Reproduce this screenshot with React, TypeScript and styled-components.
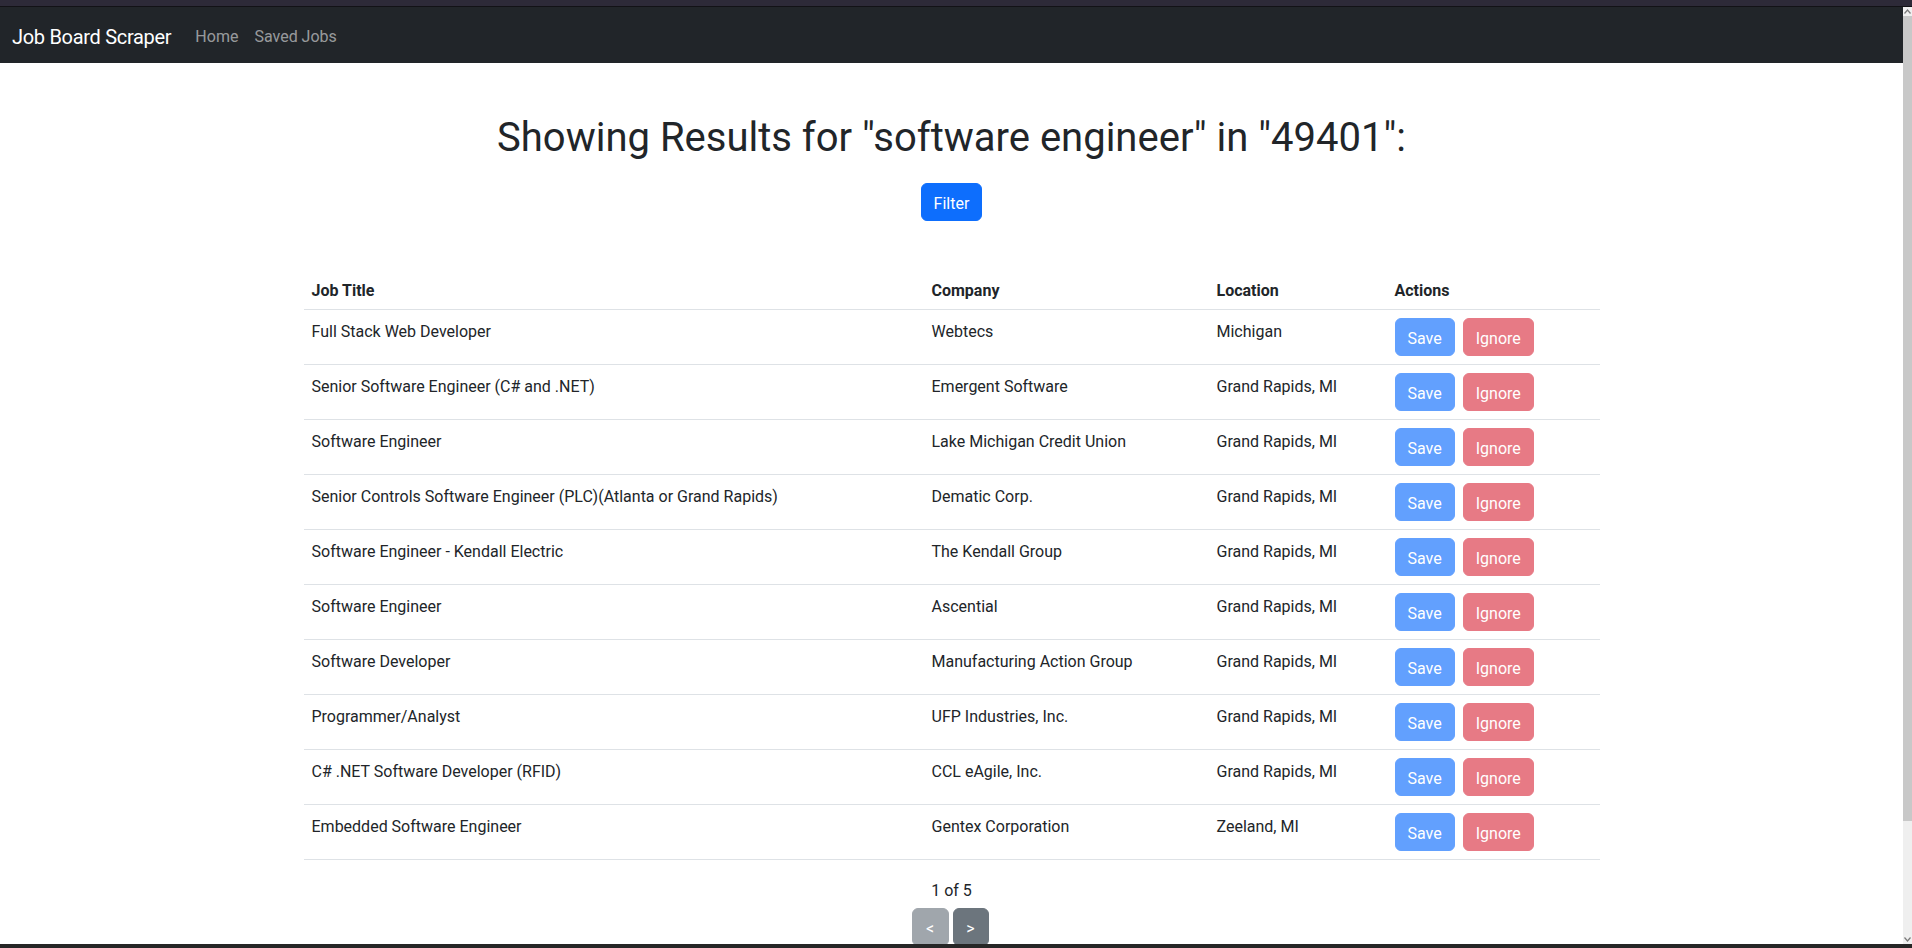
import React from 'react';
import styled, { createGlobalStyle } from 'styled-components';

const FONT = `Roboto, "Liberation Sans", Arial, sans-serif`;

const GlobalStyle = createGlobalStyle`
  *, *::before, *::after { box-sizing: border-box; }
  html, body { margin: 0; padding: 0; overflow: hidden; background: #fff; }
  body {
    font-family: ${FONT};
    font-size: 16px;
    line-height: 1.5;
    color: #212529;
  }
`;

const Frame = styled.div`
  display: flex;
  flex-direction: column;
  width: 1912px;
  height: 948px;
  overflow: hidden;
`;

const TopStrip = styled.div`
  flex-shrink: 0;
  height: 7px;
  background: #2d2a38;
  border-bottom: 1px solid #121216;
`;

const BottomStrip = styled.div`
  flex-shrink: 0;
  height: 4px;
  background: #262626;
`;

const Middle = styled.div`
  flex: 1;
  display: flex;
  min-height: 0;
`;

const Page = styled.div`
  flex: 1;
  min-width: 0;
  overflow: hidden;
  background: #fff;
`;

const Scrollbar = styled.div`
  flex-shrink: 0;
  width: 9px;
  display: flex;
  flex-direction: column;
  background: #f0f0f0;
`;

const ScrollArrow = styled.div`
  height: 9px;
  display: flex;
  align-items: center;
  justify-content: center;
  background: #f0f0f0;
`;

const Thumb = styled.div`
  height: 805px;
  background: #c8c8c8;
`;

const Track = styled.div`
  flex: 1;
  background: #efefef;
`;

const Navbar = styled.nav`
  height: 56px;
  background: #212529;
  display: flex;
  align-items: center;
  padding: 3px 12px 0;
`;

const Brand = styled.a`
  font-size: 20px;
  line-height: 30px;
  letter-spacing: -0.3px;
  color: #fff;
  margin-right: 16px;
  text-decoration: none;
`;

const NavLink = styled.a`
  padding: 8px;
  font-size: 16px;
  line-height: 24px;
  color: rgba(255, 255, 255, 0.55);
  text-decoration: none;
`;

const Container = styled.main`
  max-width: 1320px;
  margin: 0 auto;
  padding: 0 12px;
  text-align: center;
`;

const Title = styled.h1`
  margin: 51px 0 21px;
  font-size: 40px;
  font-weight: 400;
  line-height: 1.2;
  color: #212529;
`;

type Variant = 'primary' | 'save' | 'ignore' | 'prev' | 'next';

const COLORS: Record<Variant, string> = {
  primary: '#0d6efd',
  save: '#62a0fe',
  ignore: '#e77a85',
  prev: '#a0a6ac',
  next: '#6c757d',
};

const Btn = styled.button<{ $variant: Variant }>`
  display: inline-block;
  font-family: ${FONT};
  font-size: 16px;
  line-height: 24px;
  padding: 8px 12px 4px;
  border-radius: 6px;
  border: 1px solid ${(p) => COLORS[p.$variant]};
  background: ${(p) => COLORS[p.$variant]};
  color: #fff;
  text-align: center;
  cursor: pointer;
`;

const PagerBtn = styled(Btn)<{ $w: number }>`
  width: ${(p) => p.$w}px;
  padding-left: 0;
  padding-right: 0;
`;

const Table = styled.table`
  width: 100%;
  margin: 48px 0 16px;
  border-collapse: collapse;
  text-align: left;
  table-layout: fixed;
`;

const Th = styled.th<{ $w: number }>`
  width: ${(p) => p.$w}px;
  padding: 10px 8px 6px;
  font-weight: 700;
  line-height: 24px;
  vertical-align: top;
  border-bottom: 1px solid #dee2e6;
`;

const Td = styled.td<{ $action?: boolean }>`
  padding: ${(p) => (p.$action ? '8px' : '10px 8px 6px')};
  line-height: 24px;
  vertical-align: top;
  border-bottom: 1px solid #dee2e6;
`;

const Actions = styled.div`
  display: flex;
  gap: 8px;
`;

const PageInfo = styled.p`
  margin: 0;
  padding-top: 3px;
  line-height: 24px;
`;

const Pager = styled.div`
  margin-top: 5px;
  display: flex;
  justify-content: center;
  gap: 4px;
  padding-right: 3px;
`;

const jobs = [
  ['Full Stack Web Developer', 'Webtecs', 'Michigan'],
  ['Senior Software Engineer (C# and .NET)', 'Emergent Software', 'Grand Rapids, MI'],
  ['Software Engineer', 'Lake Michigan Credit Union', 'Grand Rapids, MI'],
  ['Senior Controls Software Engineer (PLC)(Atlanta or Grand Rapids)', 'Dematic Corp.', 'Grand Rapids, MI'],
  ['Software Engineer - Kendall Electric', 'The Kendall Group', 'Grand Rapids, MI'],
  ['Software Engineer', 'Ascential', 'Grand Rapids, MI'],
  ['Software Developer', 'Manufacturing Action Group', 'Grand Rapids, MI'],
  ['Programmer/Analyst', 'UFP Industries, Inc.', 'Grand Rapids, MI'],
  ['C# .NET Software Developer (RFID)', 'CCL eAgile, Inc.', 'Grand Rapids, MI'],
  ['Embedded Software Engineer', 'Gentex Corporation', 'Zeeland, MI'],
];

const Arrow = ({ up }: { up: boolean }) => (
  <svg width="7" height="5" viewBox="0 0 7 5">
    <path d={up ? 'M0.5 4.5 L3.5 1 L6.5 4.5' : 'M0.5 0.5 L3.5 4 L6.5 0.5'} fill="none" stroke="#7a7a7a" strokeWidth="1.2" />
  </svg>
);

export default function App() {
  return (
    <>
      <GlobalStyle />
      <Frame>
        <TopStrip />
        <Middle>
          <Page>
            <Navbar>
              <Brand href="#">Job Board Scraper</Brand>
              <NavLink href="#">Home</NavLink>
              <NavLink href="#">Saved Jobs</NavLink>
            </Navbar>
            <Container>
              <Title>Showing Results for "software engineer" in "49401":</Title>
              <Btn $variant="primary">Filter</Btn>
              <Table>
                <thead>
                  <tr>
                    <Th $w={620}>Job Title</Th>
                    <Th $w={285}>Company</Th>
                    <Th $w={178}>Location</Th>
                    <Th $w={213}>Actions</Th>
                  </tr>
                </thead>
                <tbody>
                  {jobs.map(([title, company, loc], i) => (
                    <tr key={i}>
                      <Td>{title}</Td>
                      <Td>{company}</Td>
                      <Td>{loc}</Td>
                      <Td $action>
                        <Actions>
                          <Btn $variant="save">Save</Btn>
                          <Btn $variant="ignore">Ignore</Btn>
                        </Actions>
                      </Td>
                    </tr>
                  ))}
                </tbody>
              </Table>
              <PageInfo>1 of 5</PageInfo>
              <Pager>
                <PagerBtn $variant="prev" $w={37}>&lt;</PagerBtn>
                <PagerBtn $variant="next" $w={36}>&gt;</PagerBtn>
              </Pager>
            </Container>
          </Page>
          <Scrollbar>
            <ScrollArrow>
              <Arrow up />
            </ScrollArrow>
            <Thumb />
            <Track />
            <ScrollArrow>
              <Arrow up={false} />
            </ScrollArrow>
          </Scrollbar>
        </Middle>
        <BottomStrip />
      </Frame>
    </>
  );
}
